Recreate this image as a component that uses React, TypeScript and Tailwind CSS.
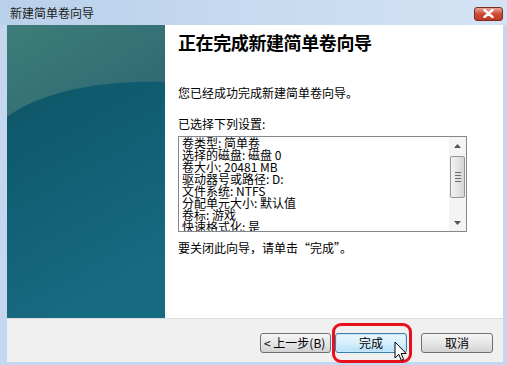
export default function App() {
  const settings = [
    "卷类型: 简单卷",
    "选择的磁盘: 磁盘 0",
    "卷大小: 20481 MB",
    "驱动器号或路径: D:",
    "文件系统: NTFS",
    "分配单元大小: 默认值",
    "卷标: 游戏",
    "快速格式化: 是",
  ];

  return (
    <div
      className="relative w-[507px] h-[365px] overflow-hidden bg-[#c4d7ee] flex flex-col"
      style={{ fontFamily: '"Noto Sans CJK SC", "Liberation Sans", sans-serif' }}
    >
      {/* title bar */}
      <div className="h-[25px] flex items-center justify-between pl-[10px] pr-[4px] bg-gradient-to-r from-[#b9d0ea] via-[#c6daf0] to-[#d4e3f4]">
        <span className="text-[12px] text-[#1a1a1a] leading-none">新建简单卷向导</span>
        <div className="w-[29px] h-[14px] mt-[2px] rounded-[3px] border border-[#7a2c22] bg-gradient-to-b from-[#e8a496] via-[#cc4a35] to-[#c03a24] flex items-center justify-center">
          <svg width="11" height="9" viewBox="0 0 11 9">
            <path d="M1.5 1 L9.5 8 M9.5 1 L1.5 8" stroke="#fff" strokeWidth="2.4" strokeLinecap="round" />
          </svg>
        </div>
      </div>

      {/* body */}
      <div className="flex-1 flex flex-col ml-[7px] mr-[4px] mb-[3px]">
        <div className="h-[293px] flex">
          <div className="w-[158px] h-full">
            <svg width="158" height="293" viewBox="0 0 158 293" preserveAspectRatio="none">
              <defs>
                <linearGradient id="dark" x1="0" y1="0" x2="0.3" y2="1">
                  <stop offset="0" stopColor="#0b5160" />
                  <stop offset="1" stopColor="#166a82" />
                </linearGradient>
                <linearGradient id="gloss" x1="0" y1="0" x2="1" y2="1">
                  <stop offset="0" stopColor="#3e7d79" />
                  <stop offset="1" stopColor="#2d6672" />
                </linearGradient>
              </defs>
              <rect width="158" height="293" fill="url(#dark)" />
              <path d="M0 0 H158 V57 C110 55 40 62 0 92 Z" fill="url(#gloss)" />
            </svg>
          </div>
          <div className="flex-1 bg-white pl-[13px] pt-[5px]">
            <h1 className="text-[18px] font-bold text-black leading-[24px] tracking-[-0.4px]">正在完成新建简单卷向导</h1>
            <p className="mt-[31px] text-[12px] text-black leading-[16px]">您已经成功完成新建简单卷向导。</p>
            <p className="mt-[15px] text-[12px] text-black leading-[16px]">已选择下列设置:</p>
            <div className="mt-[4px] w-[289px] h-[96px] border border-[#828790] flex bg-white">
              <div className="flex-1 overflow-hidden pl-[3px]">
                {settings.map((s) => (
                  <div key={s} className="text-[12px] leading-[12px] h-[12px] text-black whitespace-nowrap">
                    {s}
                  </div>
                ))}
              </div>
              <div className="w-[17px] h-full bg-[#f4f4f4] flex flex-col items-center">
                <div className="h-[17px] flex items-center justify-center">
                  <svg width="7" height="4" viewBox="0 0 7 4">
                    <path d="M0 4 L3.5 0 L7 4 Z" fill="#555" />
                  </svg>
                </div>
                <div className="w-[15px] h-[42px] mt-[2px] rounded-[2px] border border-[#979797] bg-gradient-to-r from-[#f3f3f3] to-[#d5d5d5] flex flex-col items-center justify-center gap-[2px]">
                  <div className="w-[6px] h-[1px] bg-[#6a6a6a]" />
                  <div className="w-[6px] h-[1px] bg-[#6a6a6a]" />
                  <div className="w-[6px] h-[1px] bg-[#6a6a6a]" />
                  <div className="w-[6px] h-[1px] bg-[#6a6a6a]" />
                </div>
                <div className="flex-1" />
                <div className="h-[17px] flex items-center justify-center">
                  <svg width="7" height="4" viewBox="0 0 7 4">
                    <path d="M0 0 L3.5 4 L7 0 Z" fill="#555" />
                  </svg>
                </div>
              </div>
            </div>
            <p className="mt-[8px] text-[12px] text-black leading-[16px]">要关闭此向导，请单击“完成”。</p>
          </div>
        </div>
        <div className="h-[1px] bg-[#dcdcdc]" />
        <div className="flex-1 bg-[#f0f0f0] flex items-start justify-end pt-[14px] pr-[10px]">
          <button className="w-[71px] h-[20px] rounded-[3px] border border-[#707070] bg-gradient-to-b from-[#f6f6f6] via-[#e6e6e6] to-[#d2d2d2] text-[12px] leading-none text-black flex items-center justify-start pl-[3px]">
            &lt; 上一步(B)
          </button>
          <button className="ml-[4px] w-[72px] h-[20px] rounded-[3px] border border-[#3c7fb1] bg-gradient-to-b from-[#eaf6fd] via-[#d6effc] to-[#b5e1fa] text-[12px] leading-none text-black flex items-center justify-center shadow-[inset_0_0_0_1px_#c6e8fb]">
            完成
          </button>
          <button className="ml-[14px] w-[72px] h-[20px] rounded-[3px] border border-[#707070] bg-gradient-to-b from-[#f6f6f6] via-[#e6e6e6] to-[#d2d2d2] text-[12px] leading-none text-black flex items-center justify-center">
            取消
          </button>
        </div>
      </div>

      {/* red highlight */}
      <div className="absolute left-[332px] top-[323px] w-[80px] h-[40px] rounded-[9px] border-[3px] border-[#e8101a]" />

      {/* mouse cursor */}
      <svg className="absolute left-[394px] top-[341px]" width="14" height="21" viewBox="0 0 14 21">
        <path d="M1 1 L1 17 L4.8 13.3 L7.3 19.3 L9.6 18.3 L7.1 12.5 L12.2 12.5 Z" fill="#fff" stroke="#000" strokeWidth="1" strokeLinejoin="round" />
      </svg>
    </div>
  );
}
